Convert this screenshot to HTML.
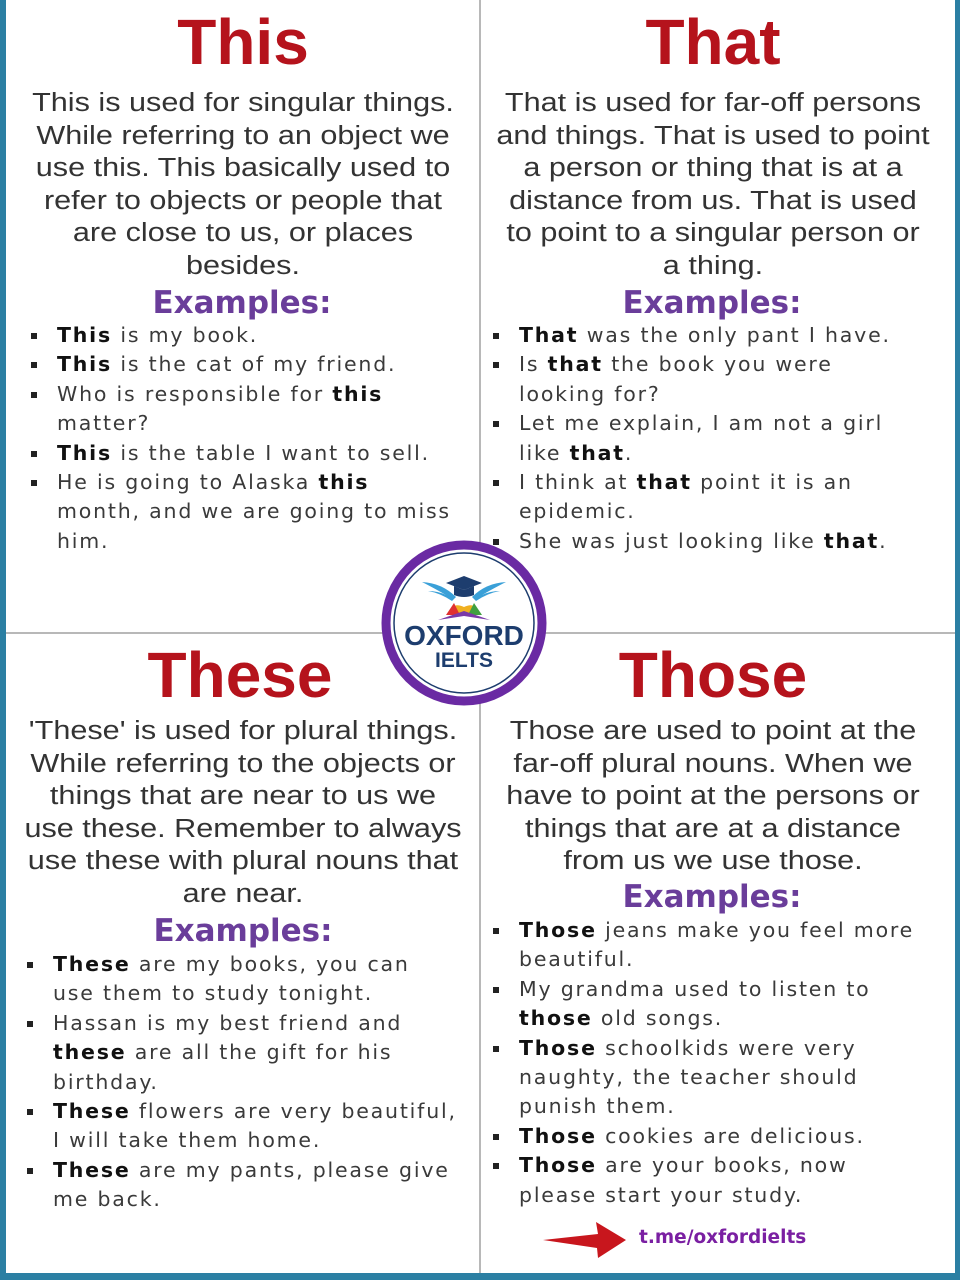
<!DOCTYPE html>
<html><head><meta charset="utf-8"><style>
*{margin:0;padding:0;box-sizing:border-box}
body{width:960px;height:1280px;background:#fff;position:relative;overflow:hidden;font-family:"Liberation Sans",sans-serif;color:#333}
.frame{position:absolute;left:0;top:0;width:960px;height:1280px;border-left:6px solid #2b7fa3;border-right:5px solid #2b7fa3;border-bottom:7px solid #2b7fa3}
.vl{position:absolute;left:479px;top:0;width:2px;height:1273px;background:#b8b8b8}
.hl{position:absolute;left:6px;top:632px;width:949px;height:2px;background:#b8b8b8}
.t{position:absolute;font-weight:bold;color:#b5131c;font-size:64px;text-align:center;width:470px;line-height:70px}
.p{position:absolute;text-align:center;width:470px;font-size:25.5px;line-height:32.6px;white-space:nowrap;color:#333;transform:scaleX(1.2)}
.ex{position:absolute;text-align:center;width:470px;font-weight:bold;color:#6a3d9a;font-size:31px;line-height:36px;font-family:"DejaVu Sans",sans-serif}
.b{position:absolute;font-family:"DejaVu Sans",sans-serif;font-size:20.5px;letter-spacing:1.8px;line-height:29.4px;white-space:nowrap;color:#3a3a3a}
.b div{position:relative}
.b div.s::before{content:"";position:absolute;width:6px;height:6px;background:#222;top:12px;left:-26px}
.b b{color:#111}
</style></head><body>
<div class="frame"></div>
<div class="vl"></div><div class="hl"></div>

<div class="t" style="left:8px;top:7px">This</div>
<div class="t" style="left:478px;top:7px">That</div>
<div class="t" style="left:5px;top:640px">These</div>
<div class="t" style="left:478px;top:640px">Those</div>

<div class="p" style="left:8px;top:87px">This is used for singular things.<br>While referring to an object we<br>use this. This basically used to<br>refer to objects or people that<br>are close to us, or places<br>besides.</div>
<div class="p" style="left:478px;top:87px">That is used for far-off persons<br>and things. That is used to point<br>a person or thing that is at a<br>distance from us. That is used<br>to point to a singular person or<br>a thing.</div>
<div class="p" style="left:8px;top:715px">'These' is used for plural things.<br>While referring to the objects or<br>things that are near to us we<br>use these. Remember to always<br>use these with plural nouns that<br>are near.</div>
<div class="p" style="left:478px;top:715px">Those are used to point at the<br>far-off plural nouns. When we<br>have to point at the persons or<br>things that are at a distance<br>from us we use those.</div>

<div class="ex" style="left:7px;top:285px">Examples:</div>
<div class="ex" style="left:477px;top:285px">Examples:</div>
<div class="ex" style="left:8px;top:913px">Examples:</div>
<div class="ex" style="left:477px;top:879px">Examples:</div>

<div class="b" style="left:57px;top:321px">
<div class="s"><b>This</b> is my book.</div>
<div class="s"><b>This</b> is the cat of my friend.</div>
<div class="s">Who is responsible for <b>this</b></div>
<div>matter?</div>
<div class="s"><b>This</b> is the table I want to sell.</div>
<div class="s">He is going to Alaska <b>this</b></div>
<div>month, and we are going to miss</div>
<div>him.</div>
</div>
<div class="b" style="left:519px;top:321px">
<div class="s"><b>That</b> was the only pant I have.</div>
<div class="s">Is <b>that</b> the book you were</div>
<div>looking for?</div>
<div class="s">Let me explain, I am not a girl</div>
<div>like <b>that</b>.</div>
<div class="s">I think at <b>that</b> point it is an</div>
<div>epidemic.</div>
<div class="s">She was just looking like <b>that</b>.</div>
</div>
<div class="b" style="left:53px;top:950px">
<div class="s"><b>These</b> are my books, you can</div>
<div>use them to study tonight.</div>
<div class="s">Hassan is my best friend and</div>
<div><b>these</b> are all the gift for his</div>
<div>birthday.</div>
<div class="s"><b>These</b> flowers are very beautiful,</div>
<div>I will take them home.</div>
<div class="s"><b>These</b> are my pants, please give</div>
<div>me back.</div>
</div>
<div class="b" style="left:519px;top:916px">
<div class="s"><b>Those</b> jeans make you feel more</div>
<div>beautiful.</div>
<div class="s">My grandma used to listen to</div>
<div><b>those</b> old songs.</div>
<div class="s"><b>Those</b> schoolkids were very</div>
<div>naughty, the teacher should</div>
<div>punish them.</div>
<div class="s"><b>Those</b> cookies are delicious.</div>
<div class="s"><b>Those</b> are your books, now</div>
<div>please start your study.</div>
</div>

<svg style="position:absolute;left:380px;top:539px" width="170" height="170" viewBox="0 0 170 170">
<circle cx="84" cy="84" r="78" fill="#fff" stroke="#6a2aa3" stroke-width="9"/>
<circle cx="84" cy="84" r="70" fill="none" stroke="#1d3d6e" stroke-width="1.5"/>
<path d="M42 43 Q62 44 76 58 L72 62 Q60 54 48 52 Q58 52 66 56 Q52 48 42 43Z" fill="#3aa0d8"/>
<path d="M126 43 Q106 44 92 58 L96 62 Q108 54 120 52 Q110 52 102 56 Q116 48 126 43Z" fill="#3aa0d8"/>
<path d="M66 44 L84 37 L102 44 L84 51Z" fill="#1d3d6e"/>
<path d="M74 47 L74 56 Q84 60 94 56 L94 47 L84 51Z" fill="#1d3d6e"/>
<path d="M68 76 Q72 62 84 68 Q96 62 100 76Z" fill="#f0b020"/>
<path d="M66 76 L74 64 L80 76Z" fill="#e03030"/>
<path d="M88 76 L94 64 L102 76Z" fill="#40a040"/>
<path d="M58 81 L84 72 L110 81 L84 77Z" fill="#7a3aa8"/>
<text x="84" y="106" text-anchor="middle" font-family="Liberation Sans" font-weight="bold" font-size="28" fill="#1d3d6e">OXFORD</text>
<text x="84" y="128" text-anchor="middle" font-family="Liberation Sans" font-weight="bold" font-size="21" fill="#1d3d6e">IELTS</text>
</svg>

<svg style="position:absolute;left:540px;top:1220px" width="90" height="42" viewBox="0 0 90 42">
<path d="M3 20 L58 14 L56 2 L86 20 L58 38 L57 28Z" fill="#c8161d"/>
</svg>
<div style="position:absolute;left:639px;top:1227px;font-weight:bold;font-size:18.5px;color:#7a1fa2;font-family:'DejaVu Sans',sans-serif">t.me/oxfordielts</div>
</body></html>
